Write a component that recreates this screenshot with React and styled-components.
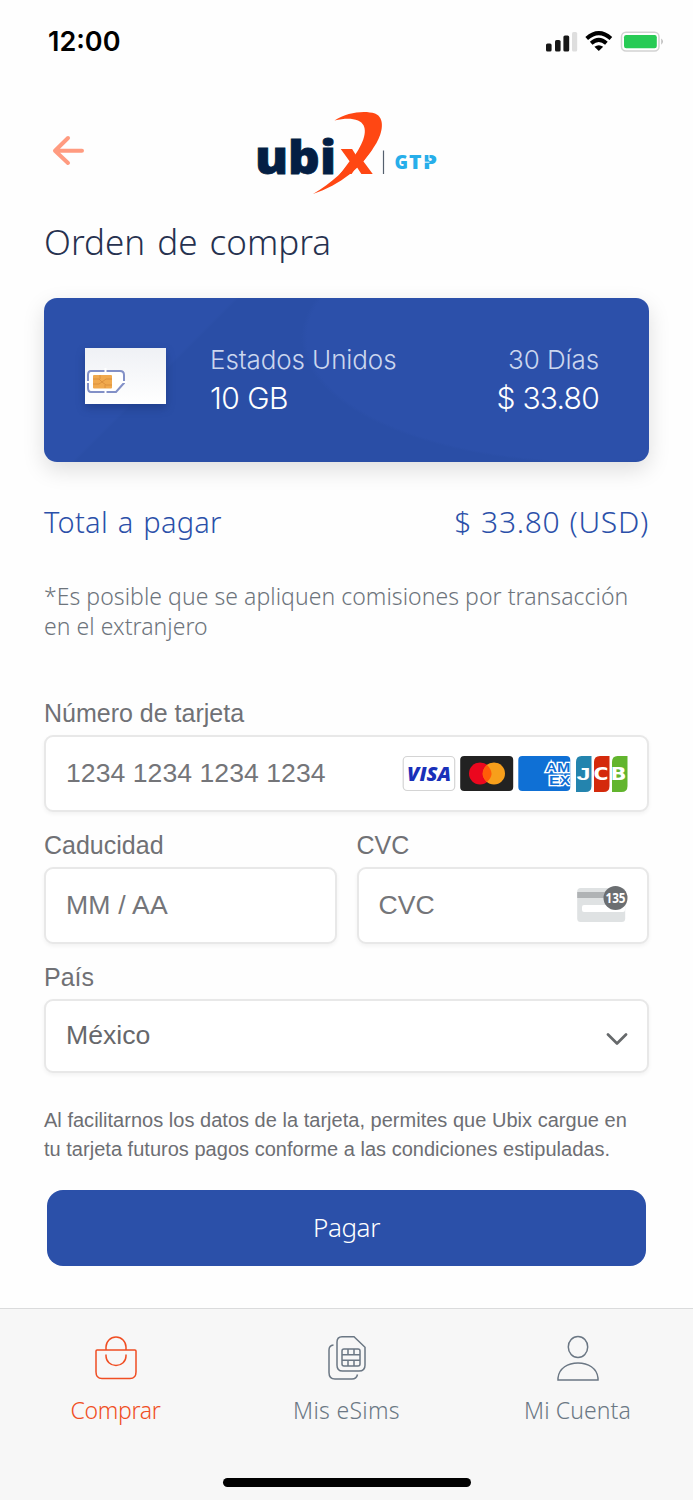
import React from "react";
import styled, { createGlobalStyle } from "styled-components";

const GlobalStyle = createGlobalStyle`
  * { box-sizing: border-box; }
  body { margin: 0; background: #fefefe; }
`;

const brandFont = `"Noto Sans", "Open Sans", sans-serif`;
const systemFont = `Inter, Roboto, sans-serif`;
const formFont = `"Liberation Sans", Arial, sans-serif`;

const Screen = styled.div`
  width: 693px;
  height: 1500px;
  display: flex;
  flex-direction: column;
  overflow: hidden;
  background: #fefefe;
  font-family: ${brandFont};
`;

const Label = styled.span`
  display: block;
  white-space: nowrap;
  font-family: ${(p) => p.$font || brandFont};
  font-size: ${(p) => p.$size}px;
  line-height: ${(p) => p.$line || 30}px;
  font-weight: ${(p) => p.$weight || 300};
  letter-spacing: ${(p) => p.$track || 0}px;
  word-spacing: ${(p) => p.$words || 0}px;
  color: ${(p) => p.$color || "#6d747c"};
`;

const StatusBar = styled.header`
  height: 84px;
  padding: 0 29px 0 48px;
  display: flex;
  align-items: center;
  justify-content: space-between;
`;

const Header = styled.div`
  height: 128px;
  display: flex;
  align-items: flex-start;
  padding: 24px 0 0 48px;
  gap: 164px;
`;

const BackButton = styled.button`
  width: 40px;
  height: 40px;
  margin-top: 23px;
  padding: 0;
  border: 0;
  background: none;
`;

const Content = styled.main`
  padding: 0 44px;
  display: flex;
  flex-direction: column;
`;

const Title = styled.h1`
  margin: 6px 0 0;
  height: 80px;
  padding-top: 4px;
`;

const PlanCard = styled.section`
  height: 164px;
  border-radius: 13px;
  background:
    radial-gradient(ellipse 286px 124px at 546px 40px, #2c50aa 0 99%, transparent 101%),
    linear-gradient(135deg, #2c50aa 0 24.8%, #2a4ea6 25.4%);
  box-shadow: 0 8px 22px rgba(0, 0, 0, 0.13);
  display: flex;
  align-items: flex-start;
  padding: 46px 50px 0 41px;
`;

const PlanInfo = styled.div`
  display: flex;
  flex-direction: column;
  align-items: ${(p) => (p.$end ? "flex-end" : "flex-start")};
  margin-left: ${(p) => (p.$end ? "auto" : "44px")};
  gap: 6px;
`;

const SimPicture = styled.svg`
  margin-top: 4px;
  filter: drop-shadow(0 4px 4px rgba(10, 25, 80, 0.3));
`;

const TotalRow = styled.div`
  display: flex;
  justify-content: space-between;
  margin-top: 40px;
  height: 80px;
`;

const Note = styled.div`
  height: 116px;
  margin-top: -1px;
  margin-bottom: 1px;
`;

const Field = styled.div`
  height: ${(p) => p.$height}px;
`;

const Box = styled.div`
  height: ${(p) => p.$height || 77}px;
  margin-top: 7px;
  padding: 0 19px 2px 20px;
  display: flex;
  align-items: center;
  justify-content: space-between;
  background: #fff;
  border: 2px solid #e8e8e8;
  border-radius: 9px;
  box-shadow: 0 2px 4px rgba(0, 0, 0, 0.05);
`;

const FieldRow = styled.div`
  display: grid;
  grid-template-columns: 1fr 1fr;
  column-gap: 20px;
`;

const Brands = styled.svg`
  display: block;
  margin-top: 2px;
`;

const Chevron = styled.svg`
  margin-top: 5px;
`;

const Legal = styled.div`
  margin-top: 33px;
`;

const PayButton = styled.button`
  margin: 27px 3px 0;
  height: 76px;
  padding-bottom: 4px;
  border: 0;
  border-radius: 16px;
  background: #2b50a9;
  display: flex;
  align-items: center;
  justify-content: center;
`;

const TabBar = styled.nav`
  margin-top: auto;
  height: 192px;
  background: #f7f7f7;
  border-top: 1px solid #dadbdc;
  display: flex;
  flex-direction: column;
  align-items: center;
  justify-content: space-between;
  padding-bottom: 13px;
`;

const Tabs = styled.div`
  width: 100%;
  display: grid;
  grid-template-columns: repeat(3, 1fr);
  padding-top: 26px;
`;

const Tab = styled.div`
  display: flex;
  flex-direction: column;
  align-items: center;
  gap: 13px;
  color: ${(p) => (p.$active ? "#f04e23" : "#6b7784")};
`;

const HomeIndicator = styled.div`
  width: 248px;
  height: 9px;
  border-radius: 5px;
  background: #000;
`;

const StatusIcons = () => (
  <svg width="119" height="24" viewBox="545 30 119 24">
    <rect x="546" y="43.5" width="5.6" height="8" rx="1.6" fill="#171717" />
    <rect x="555" y="40" width="5.6" height="11.5" rx="1.6" fill="#171717" />
    <rect x="563.4" y="35.5" width="5.8" height="16" rx="1.6" fill="#171717" />
    <rect x="572" y="32" width="5.2" height="19.5" rx="1.6" fill="#dedede" />
    <g fill="none" stroke="#000" strokeWidth="4">
      <path d="M586.7 38.4Q598.8 27.700 610.9 38.4" />
      <path d="M591.2 43.200Q598.8 36.600 606.4 43.200" />
    </g>
    <path d="M594.4 46.800Q598.8 43.600 603.2 46.800L598.8 51Z" fill="#000" />
    <rect x="621.5" y="32.3" width="37.5" height="18.7" rx="4.5" fill="#fff" stroke="#d2d2d2" strokeWidth="1.5" />
    <rect x="624" y="35" width="32.8" height="13.3" rx="2.2" fill="#27cb55" />
    <path d="M661.5 38.5Q663.8 41.5 661.5 44.7Z" fill="#9b9b9b" />
  </svg>
);

const Logo = () => (
  <svg width="190" height="90" viewBox="252 108 190 90">
    <text x="255" y="174" fontFamily="Open Sans" fontWeight="800" fontSize="46" fill="#041f44" stroke="#041f44" strokeWidth=".8" textLength="81" lengthAdjust="spacingAndGlyphs">ubi</text>
    <text x="340" y="174" fontFamily="Open Sans" fontWeight="800" fontSize="45" fill="#ff4713" textLength="33" lengthAdjust="spacingAndGlyphs">x</text>
    <path d="M334.5 120.5C347 112.500 364 110.200 375 113.600C385.500 118 382.500 133 376.500 143C362 168 340 185 313 194C332 183 346 170 357 152C366 138 368.500 125 358 120.500C351.500 118 344 118.500 334.500 120.500Z" fill="#ff4713" />
    <path d="M383.500 150.500V174" stroke="#55606e" strokeWidth="1.2" />
    <g fontFamily="Open Sans" fontWeight="800" fontSize="18.500" fill="#27aeea">
      <text x="394.500" y="169" textLength="13.500" lengthAdjust="spacingAndGlyphs">G</text>
      <text x="409" y="169" textLength="12.500" lengthAdjust="spacingAndGlyphs">T</text>
      <text x="423" y="169" textLength="14" lengthAdjust="spacingAndGlyphs">P</text>
    </g>
    <path d="M422.500 162.200H429.500M429 154V160" stroke="#fefefe" strokeWidth="1" />
  </svg>
);

const Sim = () => (
  <SimPicture width="81" height="56" viewBox="0 0 81 56">
    <defs>
      <linearGradient id="paper" x2="0" y2="1">
        <stop stopColor="#eff1f5" />
        <stop offset="1" stopColor="#fff" />
      </linearGradient>
    </defs>
    <path d="M0 0H81V56H0Z" fill="url(#paper)" />
    <path d="M6 23H35Q39 23 39 27V35L31 44H6Q3 44 3 40V27Q3 23 6 23Z" fill="#fff" stroke="#8290c7" strokeWidth="2" />
    <path d="M20.500 20V25M20.500 42V47M0 34H5M37 34H42" stroke="#fff" strokeWidth="2" />
    <rect x="8" y="27" width="19" height="13.500" rx="1" fill="#f0a94e" />
    <path d="M8 31H14L17 34L21 31H27M8 36H14L17 34L21 37H27M15 27V31M20 37V40" fill="none" stroke="#d78a38" strokeWidth=".8" />
  </SimPicture>
);

const CardBrands = () => (
  <Brands width="226" height="38" viewBox="402 755 226 38">
    <defs>
      <clipPath id="amex"><rect x="518.300" y="756" width="52" height="35" rx="4" /></clipPath>
    </defs>
    <rect x="403.200" y="756.500" width="51.500" height="34" rx="4" fill="#fff" stroke="#d4d4d4" strokeWidth="1.200" />
    <text x="407" y="780.700" fontFamily="Open Sans" fontStyle="italic" fontWeight="800" fontSize="18.500" fill="#1930b9" textLength="44" lengthAdjust="spacingAndGlyphs">VISA</text>
    <rect x="460.200" y="756" width="53" height="35" rx="4" fill="#222" />
    <circle cx="480" cy="773.500" r="11" fill="#eb071e" />
    <circle cx="494" cy="773.500" r="11" fill="#f79f1b" />
    <path d="M487 765Q496 773.500 487 782Q478 773.500 487 765" fill="#ff5c08" />
    <g clipPath="url(#amex)">
      <rect x="518" y="756" width="53" height="35" fill="#0f70d5" />
      <g fontFamily="Liberation Sans" fontWeight="700" fontSize="13" fill="#0f70d5" stroke="#fff" strokeWidth="2.600" paintOrder="stroke">
        <text x="545.500" y="772" textLength="25" lengthAdjust="spacingAndGlyphs">AM</text>
        <text x="549" y="784.600" textLength="21.500" lengthAdjust="spacingAndGlyphs">EX</text>
      </g>
    </g>
    <path d="M581.500 756H591.500V786Q591.500 792 585.500 792H576V762Q576 756 581.500 756Z" fill="#2484ae" />
    <path d="M600 756H609.500V786Q609.500 792 603.500 792H594V762Q594 756 600 756Z" fill="#d42a0c" />
    <path d="M617.500 756H627.500V786Q627.500 792 621.500 792H612V762Q612 756 617.500 756Z" fill="#62b52e" />
    <g fontFamily="DejaVu Sans" fontWeight="700" fontSize="17" fill="#fff">
      <text x="576.500" y="780" fontFamily="Liberation Sans" textLength="14" lengthAdjust="spacingAndGlyphs">J</text>
      <text x="593.500" y="780" textLength="15" lengthAdjust="spacingAndGlyphs">C</text>
      <text x="610.500" y="780" textLength="16" lengthAdjust="spacingAndGlyphs">B</text>
    </g>
  </Brands>
);

const CvcCard = () => (
  <svg width="51" height="38" viewBox="577 886 51 38">
    <rect x="577.200" y="888" width="48" height="34" rx="3.500" fill="#dfe2e3" />
    <path d="M577.200 892H625V898H577.200Z" fill="#b0b3b5" />
    <rect x="582" y="905" width="43" height="7" rx="2" fill="#fff" />
    <circle cx="615.500" cy="898" r="12" fill="#6b6e71" />
    <text x="605.500" y="902.600" fontFamily="Open Sans" fontWeight="700" fontSize="13.500" fill="#fff" textLength="20" lengthAdjust="spacingAndGlyphs">135</text>
  </svg>
);

const BagIcon = () => (
  <svg width="42" height="46" viewBox="0 0 42 46" fill="none" stroke="currentColor" strokeWidth="1.500">
    <path d="M1 16Q1 15 2 15H40Q41 15 41 16V37Q41 43.500 35 43.500H7Q1 43.500 1 37Z" />
    <path d="M11 15V12A10 10 0 0 1 31 12V15M11 19.500V21A10 9.500 0 0 0 31 21V19.500" />
  </svg>
);

const SimsIcon = () => (
  <svg width="40" height="46" viewBox="0 0 40 46" fill="none" stroke="currentColor" strokeWidth="1.500">
    <path d="M15 1.700H27L38 12.200V30.200Q38 36 32 36H15.500Q10 36 10 30.200V7Q10 1.700 15 1.700Z" />
    <path d="M6.500 10Q2 10.500 2 15V37.500Q2 44 8 44H25Q29.500 44 30.500 39.500" />
    <rect x="15" y="14" width="18" height="17" rx="2" />
    <path d="M15 19.700H33M15 25.300H33M21 14V19.500M27 14V19.500M21 25.500V31M27 25.500V31" />
  </svg>
);

const UserIcon = () => (
  <svg width="42" height="46" viewBox="0 0 42 46" fill="none" stroke="currentColor" strokeWidth="1.500">
    <ellipse cx="21" cy="12" rx="9.700" ry="10.500" />
    <path d="M1 46V44C2 34 11 29 21 29S40 34 41 44V46Z" transform="translate(0 -1)" />
  </svg>
);

const tabs = [
  { name: "Comprar", Icon: BagIcon, active: true, track: -0.3 },
  { name: "Mis eSims", Icon: SimsIcon, track: 0.3 },
  { name: "Mi Cuenta", Icon: UserIcon, track: 0.1 },
];

export default function App() {
  return (
    <Screen>
      <GlobalStyle />
      <StatusBar>
        <Label $font={systemFont} $size={27} $line={32} $weight={600} $color="#000">12:00</Label>
        <StatusIcons />
      </StatusBar>
      <Header>
        <BackButton aria-label="Volver">
          <svg width="40" height="40" fill="none" stroke="#ff9b80" strokeWidth="4" strokeLinecap="round" strokeLinejoin="round">
            <path d="M34 19.800H7M20 7L7 19.800L20 32" />
          </svg>
        </BackButton>
        <Logo />
      </Header>
      <Content>
        <Title>
          <Label $size={35} $line={40} $words={3} $color="#26314f">Orden de compra</Label>
        </Title>
        <PlanCard>
          <Sim />
          <PlanInfo>
            <Label $font={systemFont} $size={26} $line={31} $track={-0.1} $color="#cbd6ee">Estados Unidos</Label>
            <Label $font={systemFont} $size={30} $line={34} $track={-0.5} $color="#fff">10 GB</Label>
          </PlanInfo>
          <PlanInfo $end>
            <Label $font={systemFont} $size={26} $line={31} $track={-0.1} $color="#cbd6ee">30 Días</Label>
            <Label $font={systemFont} $size={30} $line={34} $track={-0.75} $color="#fff">$ 33.80</Label>
          </PlanInfo>
        </PlanCard>
        <TotalRow>
          <Label $size={29} $line={40} $track={0.25} $words={2} $color="#2b50a9">Total a pagar</Label>
          <Label $size={30} $line={40} $track={0.7} $words={0.5} $color="#2b50a9">$ 33.80 (USD)</Label>
        </TotalRow>
        <Note>
          <Label $size={23} $track={0.05}>*Es posible que se apliquen comisiones por transacción</Label>
          <Label $size={23} $track={0.05}>en el extranjero</Label>
        </Note>
        <Field $height={132}>
          <Label $font={formFont} $size={25} $weight={400} $color="#707175">Número de tarjeta</Label>
          <Box>
            <Label $font={formFont} $size={26.6} $weight={400} $track={0.04} $color="#747579">1234 1234 1234 1234</Label>
            <CardBrands />
          </Box>
        </Field>
        <FieldRow>
          <Field $height={132}>
            <Label $font={formFont} $size={25} $weight={400} $color="#707175">Caducidad</Label>
            <Box><Label $font={formFont} $size={26.6} $weight={400} $track={0.2} $color="#747579">MM / AA</Label></Box>
          </Field>
          <Field $height={132}>
            <Label $font={formFont} $size={25} $weight={400} $color="#707175">CVC</Label>
            <Box>
              <Label $font={formFont} $size={26.6} $weight={400} $color="#747579">CVC</Label>
              <CvcCard />
            </Box>
          </Field>
        </FieldRow>
        <Field $height={111}>
          <Label $font={formFont} $size={25} $weight={400} $color="#707175">País</Label>
          <Box $height={74}>
            <Label $font={formFont} $size={26.6} $weight={400} $color="#67686b">México</Label>
            <Chevron width="22" height="14" viewBox="0 -2 22 14" fill="none" stroke="#66696b" strokeWidth="2.700" strokeLinecap="round" strokeLinejoin="round">
              <path d="M2 1.500L11 10.500L20 1.500" />
            </Chevron>
          </Box>
        </Field>
        <Legal>
          <Label $font={formFont} $size={20} $line={28.5} $weight={400} $track={0.02} $color="#6d6e73">Al facilitarnos los datos de la tarjeta, permites que Ubix cargue en</Label>
          <Label $font={formFont} $size={20} $line={28.5} $weight={400} $track={0.02} $color="#6d6e73">tu tarjeta futuros pagos conforme a las condiciones estipuladas.</Label>
        </Legal>
        <PayButton>
          <Label $size={26} $track={-0.4} $color="#fff">Pagar</Label>
        </PayButton>
      </Content>
      <TabBar>
        <Tabs>
          {tabs.map(({ name, Icon, active, track }) => (
            <Tab key={name} $active={active}>
              <Icon />
              <Label $size={23} $line={32} $color="inherit" $track={track}>{name}</Label>
            </Tab>
          ))}
        </Tabs>
        <HomeIndicator />
      </TabBar>
    </Screen>
  );
}
